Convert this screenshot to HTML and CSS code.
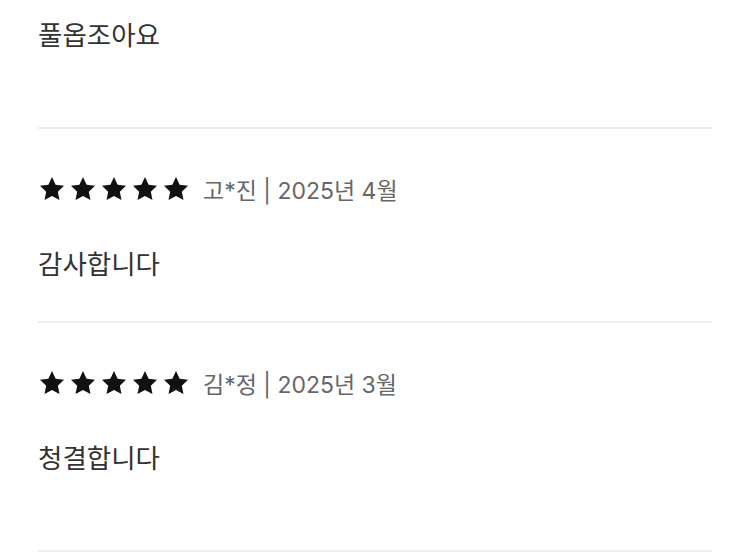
FILE: index.html
```html
<!DOCTYPE html>
<html lang="ko">
<head>
    <meta charset="UTF-8">
    <meta name="viewport" content="width=device-width, initial-scale=1.0">
    <title>리뷰</title>
    <link rel="stylesheet" href="styles.css">
</head>
<body>
    <div class="review-list">
        <div class="review review-cut review-long">
            <p class="review-text">풀옵조아요</p>
        </div>

        <div class="review">
            <div class="review-head">
                <span class="stars">
                    <svg viewBox="0 0 24 24"><path d="M12 1.8l3.1 6.6 7.2.9-5.3 5 1.4 7.1L12 17.9l-6.4 3.5 1.4-7.1-5.3-5 7.2-.9z"/></svg>
                    <svg viewBox="0 0 24 24"><path d="M12 1.8l3.1 6.6 7.2.9-5.3 5 1.4 7.1L12 17.9l-6.4 3.5 1.4-7.1-5.3-5 7.2-.9z"/></svg>
                    <svg viewBox="0 0 24 24"><path d="M12 1.8l3.1 6.6 7.2.9-5.3 5 1.4 7.1L12 17.9l-6.4 3.5 1.4-7.1-5.3-5 7.2-.9z"/></svg>
                    <svg viewBox="0 0 24 24"><path d="M12 1.8l3.1 6.6 7.2.9-5.3 5 1.4 7.1L12 17.9l-6.4 3.5 1.4-7.1-5.3-5 7.2-.9z"/></svg>
                    <svg viewBox="0 0 24 24"><path d="M12 1.8l3.1 6.6 7.2.9-5.3 5 1.4 7.1L12 17.9l-6.4 3.5 1.4-7.1-5.3-5 7.2-.9z"/></svg>
                </span>
                <span class="review-meta">고*진 | 2025년 4월</span>
            </div>
            <p class="review-text">감사합니다</p>
        </div>

        <div class="review review-long">
            <div class="review-head">
                <span class="stars">
                    <svg viewBox="0 0 24 24"><path d="M12 1.8l3.1 6.6 7.2.9-5.3 5 1.4 7.1L12 17.9l-6.4 3.5 1.4-7.1-5.3-5 7.2-.9z"/></svg>
                    <svg viewBox="0 0 24 24"><path d="M12 1.8l3.1 6.6 7.2.9-5.3 5 1.4 7.1L12 17.9l-6.4 3.5 1.4-7.1-5.3-5 7.2-.9z"/></svg>
                    <svg viewBox="0 0 24 24"><path d="M12 1.8l3.1 6.6 7.2.9-5.3 5 1.4 7.1L12 17.9l-6.4 3.5 1.4-7.1-5.3-5 7.2-.9z"/></svg>
                    <svg viewBox="0 0 24 24"><path d="M12 1.8l3.1 6.6 7.2.9-5.3 5 1.4 7.1L12 17.9l-6.4 3.5 1.4-7.1-5.3-5 7.2-.9z"/></svg>
                    <svg viewBox="0 0 24 24"><path d="M12 1.8l3.1 6.6 7.2.9-5.3 5 1.4 7.1L12 17.9l-6.4 3.5 1.4-7.1-5.3-5 7.2-.9z"/></svg>
                </span>
                <span class="review-meta">김*정 | 2025년 3월</span>
            </div>
            <p class="review-text">청결합니다</p>
        </div>
    </div>
</body>
</html>
```

FILE: styles.css
```css
body {
    margin: 0;
    background: #fff;
    font-family: "Noto Sans CJK KR", "Noto Sans", sans-serif;
    color: #222;
}
.review-list {
    padding: 0 38px;
}
.review {
    padding: 44px 0 40px;
    border-bottom: 2px solid #eee;
}
.review-cut {
    padding-top: 16px;
}
.review-long {
    padding-bottom: 75px;
}
.review-head {
    display: flex;
    align-items: center;
    height: 32px;
    margin-bottom: 40px;
}
.stars {
    display: flex;
    gap: 3px;
}
.stars svg {
    width: 28px;
    height: 28px;
    fill: #111;
}
.review-meta {
    margin-left: 13px;
    font-family: Inter, "Noto Sans CJK KR", sans-serif;
    font-size: 23px;
    color: #666;
}
.review-text {
    margin: 0;
    font-size: 26.5px;
    line-height: 36px;
    color: #333;
}
```
